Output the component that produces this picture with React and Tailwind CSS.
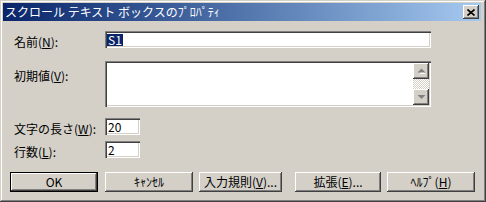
import React from "react";

const FONT = { fontFamily: '"MS UI Gothic", "Noto Sans CJK JP", "Liberation Sans", sans-serif' };

const sunken = "bg-white shadow-[inset_1px_1px_#808080,inset_2px_2px_#404040,inset_-1px_-1px_#ffffff,inset_-2px_-2px_#d4d0c8]";
const raised = "bg-[#d4d0c8] shadow-[inset_-1px_-1px_#404040,inset_1px_1px_#ffffff,inset_-2px_-2px_#808080,inset_2px_2px_#d4d0c8]";

function Label({ text, k }) {
  return (
    <span className="text-[12px] leading-[14px] text-black whitespace-nowrap">
      {text}(<span className="underline">{k}</span>):
    </span>
  );
}

function Arrow({ up }) {
  return (
    <div className={`w-[16px] h-[16px] flex items-center justify-center ${raised}`}>
      <svg width="9" height="6" viewBox="0 0 9 6">
        {up ? (
          <>
            <polygon points="1.5,5 4.5,2 7.5,5" fill="#ffffff" transform="translate(1,1)" />
            <polygon points="0.5,4.5 4.5,0.5 8.5,4.5" fill="#808080" />
          </>
        ) : (
          <>
            <polygon points="0.5,1 4.5,5 8.5,1" fill="#808080" />
          </>
        )}
      </svg>
    </div>
  );
}

function Btn({ children, w, def, className = "" }) {
  if (def) {
    return (
      <div className={`h-[20px] border border-black ${className}`} style={{ width: w }}>
        <div className={`w-full h-full flex items-center justify-center text-[12px] ${raised}`}>{children}</div>
      </div>
    );
  }
  return (
    <div className={`h-[20px] flex items-center justify-center text-[12px] ${raised} ${className}`} style={{ width: w }}>
      {children}
    </div>
  );
}

export default function App() {
  return (
    <div
      className="w-[486px] h-[202px] bg-[#d4d0c8] p-[3px] flex flex-col shadow-[inset_-1px_-1px_#404040,inset_1px_1px_#d4d0c8,inset_-2px_-2px_#808080,inset_2px_2px_#ffffff]"
      style={FONT}
    >
      <div className="h-[18px] w-[478px] flex items-center justify-between pl-[2px] pr-[2px] bg-gradient-to-r from-[#0a246a] to-[#a6caf0]">
        <span className="text-white text-[12px] leading-[14px] whitespace-nowrap">スクロール テキスト ボックスのﾌﾟﾛﾊﾟﾃｨ</span>
        <div className={`w-[16px] h-[14px] flex items-center justify-center ${raised}`}>
          <svg width="8" height="7" viewBox="0 0 8 7">
            <path d="M0.5 0.5 L7.5 6.5 M7.5 0.5 L0.5 6.5" stroke="#000" strokeWidth="1.6" />
          </svg>
        </div>
      </div>

      <div className="flex flex-col pl-[11px] mt-[10px]">
        <div className="flex items-center h-[17px]">
          <div className="w-[91px]"><Label text="名前" k="N" /></div>
          <div className={`w-[326px] h-[17px] flex items-center pl-[2px] ${sunken}`}>
            <span className="bg-[#0a246a] text-white text-[12px] leading-[12px] h-[12px] px-[1px]">S1</span>
          </div>
        </div>

        <div className="flex items-start mt-[13px]">
          <div className="w-[91px] pt-[1px]"><Label text="初期値" k="V" /></div>
          <div className={`w-[326px] h-[46px] p-[2px] flex justify-end ${sunken}`}>
            <div className="w-[16px] h-[42px] flex flex-col">
              <Arrow up />
              <div className="flex-1 bg-[repeating-conic-gradient(#d4d0c8_0%_25%,#ffffff_0%_50%)] bg-[length:2px_2px]" />
              <Arrow />
            </div>
          </div>
        </div>

        <div className="flex items-center mt-[11px] h-[17px]">
          <div className="w-[91px]"><Label text="文字の長さ" k="W" /></div>
          <div className={`w-[35px] h-[17px] flex items-center pl-[3px] text-[12px] ${sunken}`}>20</div>
        </div>

        <div className="flex items-center mt-[6px] h-[17px]">
          <div className="w-[91px]"><Label text="行数" k="L" /></div>
          <div className={`w-[35px] h-[17px] flex items-center pl-[3px] text-[12px] ${sunken}`}>2</div>
        </div>
      </div>

      <div className="flex mt-[14px] pl-[7px]">
        <Btn w={88} def>OK</Btn>
        <Btn w={88} className="ml-[7px]">ｷｬﾝｾﾙ</Btn>
        <Btn w={83} className="ml-[6px]">入力規則(<span className="underline">V</span>)...</Btn>
        <Btn w={86} className="ml-[13px]">拡張(<span className="underline">E</span>)...</Btn>
        <Btn w={88} className="ml-[6px]">ﾍﾙﾌﾟ(<span className="underline">H</span>)</Btn>
      </div>
    </div>
  );
}
